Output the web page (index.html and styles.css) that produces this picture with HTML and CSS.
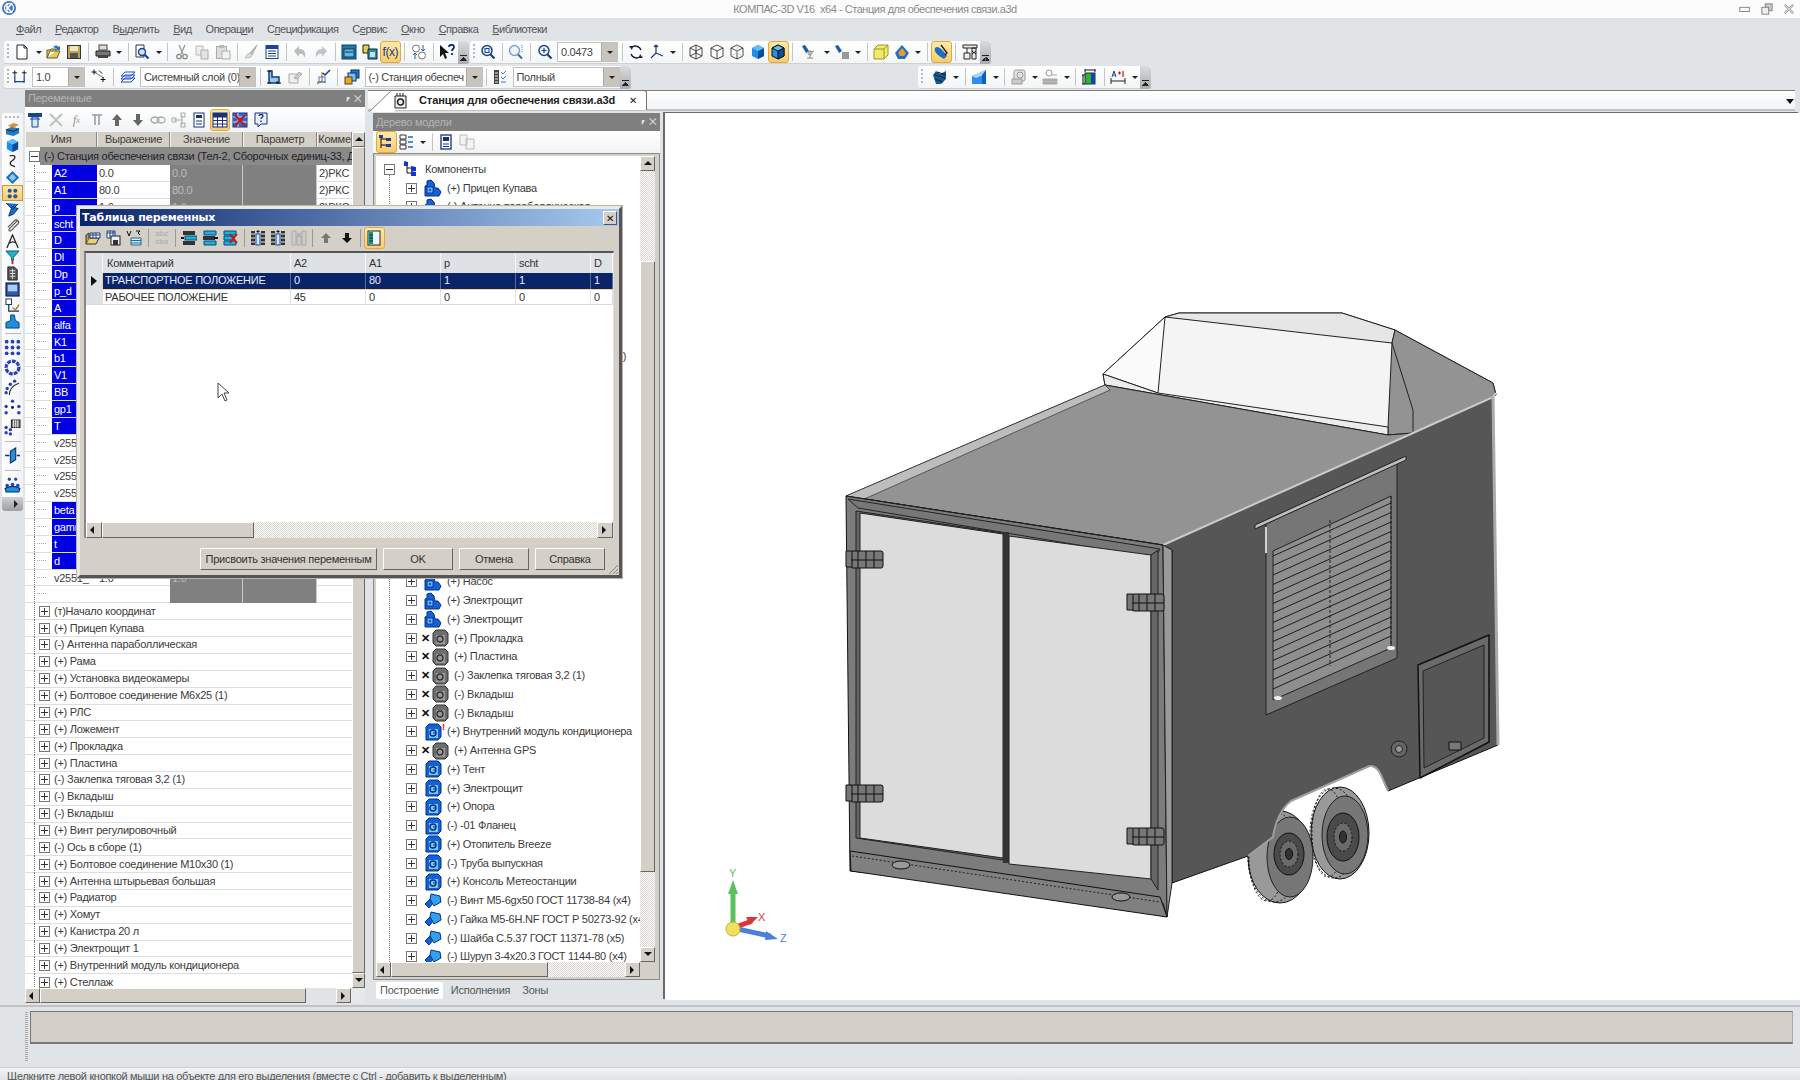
FILE: index.html
```html
<!DOCTYPE html>
<html lang="ru">
<head>
    <meta charset="UTF-8">
    <title>КОМПАС-3D V16 x64 - Станция для обеспечения связи.a3d</title>
    <link rel="stylesheet" href="styles.css">
</head>
<body>
<!-- icon sprite -->
<svg class="sprite" xmlns="http://www.w3.org/2000/svg">
    <symbol id="new" viewBox="0 0 16 16"><path d="M3 1h7l3 3v11H3z" fill="#fff" stroke="#222"/><path d="M10 1v3h3" fill="none" stroke="#222"/></symbol>
    <symbol id="open" viewBox="0 0 16 16"><path d="M1 14V6h3l1-1h5v2H4l-3 7h10l3-7H10" fill="#e8c860" stroke="#6b5a1c"/><path d="M7 3c2-2 4-2 6 0l1-1v4h-4l1-1c-1-1-2-1-4-2z" fill="#1e6fd0"/></symbol>
    <symbol id="save" viewBox="0 0 16 16"><rect x="1.5" y="1.5" width="13" height="13" fill="#b9a45a" stroke="#333"/><rect x="4" y="2" width="8" height="5" fill="#efe6b8"/><rect x="4" y="9" width="8" height="5" fill="#555"/></symbol>
    <symbol id="print" viewBox="0 0 16 16"><rect x="4" y="1" width="8" height="5" fill="#ddd" stroke="#444"/><path d="M1 7h14v5H1z" fill="#777" stroke="#222"/><rect x="3" y="11" width="10" height="3" fill="#444"/></symbol>
    <symbol id="prev" viewBox="0 0 16 16"><path d="M2 1h8v12H2z" fill="#fff" stroke="#334"/><circle cx="8" cy="8" r="3.5" fill="#cfe4f6" stroke="#1b3f8f" stroke-width="1.4"/><path d="M10.500 10.500l4 4" stroke="#1b3f8f" stroke-width="2"/></symbol>
    <symbol id="cut" viewBox="0 0 16 16"><path d="M5 1l4 9M11 1l-4 9" stroke="#999" stroke-width="1.300" fill="none"/><circle cx="5" cy="12.500" r="2.200" fill="none" stroke="#888" stroke-width="1.300"/><circle cx="11" cy="12.500" r="2.200" fill="none" stroke="#888" stroke-width="1.300"/></symbol>
    <symbol id="copy" viewBox="0 0 16 16"><path d="M2 2h7v9H2z" fill="#eee" stroke="#bbb"/><path d="M7 6h7v9H7z" fill="#e4e4e4" stroke="#aaa"/></symbol>
    <symbol id="paste" viewBox="0 0 16 16"><rect x="1.500" y="2.500" width="10" height="12" fill="#ddd" stroke="#aaa"/><rect x="4" y="1" width="5" height="3" fill="#bbb"/><path d="M7 7h8v8H7z" fill="#f2f2f2" stroke="#aaa"/></symbol>
    <symbol id="brush" viewBox="0 0 16 16"><path d="M14 1L7 9l2 2z" fill="#bbb" stroke="#aaa"/><path d="M7 9c-3 0-3 3-5 5 4 0 7-1 7-3z" fill="#ddd" stroke="#bbb"/></symbol>
    <symbol id="props" viewBox="0 0 16 16"><rect x="2" y="1.500" width="12" height="13" fill="#fff" stroke="#17458f"/><path d="M2 2h12v3H2z" fill="#17458f"/><path d="M4 7h8M4 9.500h8M4 12h8" stroke="#17458f"/></symbol>
    <symbol id="undo" viewBox="0 0 16 16"><path d="M2 7l5-5v3c5 0 7 3 6 9-1-3-3-5-6-4v3z" fill="#bbb"/></symbol>
    <symbol id="redo" viewBox="0 0 16 16"><path d="M14 7L9 2v3C4 5 2 8 3 14c1-3 3-5 6-4v3z" fill="#c4c4c4"/></symbol>
    <symbol id="win" viewBox="0 0 16 16"><rect x="1" y="1" width="14" height="14" fill="#1a7ea8" stroke="#0b3a6c"/><rect x="3" y="5" width="10" height="8" fill="#6bb7d8" stroke="#0b3a6c"/><path d="M4 8h8" stroke="#0b3a6c"/></symbol>
    <symbol id="tips" viewBox="0 0 16 16"><path d="M1 1h6v8H1z" fill="#e3d24a" stroke="#222"/><path d="M6 5h9v10H6z" fill="#3b8a9e" stroke="#123"/><path d="M8 8h5v5H8z" fill="#bfe3ee"/></symbol>
    <symbol id="swap" viewBox="0 0 16 16"><circle cx="5" cy="4.500" r="3.500" fill="#fff" stroke="#777"/><circle cx="11" cy="11.500" r="3.500" fill="#fff" stroke="#777"/><path d="M12 1v6M10 5l2 2 2-2M4 9v6M2 11l2-2 2 2" stroke="#1e5fb0" fill="none"/></symbol>
    <symbol id="help" viewBox="0 0 16 16"><path d="M1 1v12l3-3 2 5 2-1-2-5h4z" fill="#111"/><path d="M10 3c0-3 5-3 5 0 0 2-2 2-2 4M13 9v2" stroke="#0a2a6a" stroke-width="1.800" fill="none"/></symbol>
    <symbol id="zwin" viewBox="0 0 16 16"><circle cx="7" cy="6.500" r="5" fill="#e8f1f8" stroke="#17458f" stroke-width="1.500"/><rect x="5" y="4.500" width="4" height="4" fill="none" stroke="#17458f"/><path d="M10.500 10.500l4 4" stroke="#1b3f6f" stroke-width="2.200"/></symbol>
    <symbol id="zall" viewBox="0 0 16 16"><circle cx="6.500" cy="6.500" r="5" fill="#eef4fa" stroke="#7ba0c8" stroke-width="1.400"/><path d="M14 1v8" stroke="#4a7fb8" stroke-dasharray="1 1"/><path d="M10 10.500l4 4" stroke="#3a6a9a" stroke-width="2"/></symbol>
    <symbol id="zplus" viewBox="0 0 16 16"><circle cx="7" cy="6.500" r="5" fill="#eef4fa" stroke="#17458f" stroke-width="1.400"/><path d="M4.500 6.500h5M7 4v5" stroke="#17458f" stroke-width="1.200"/><path d="M10.500 10.500l4 4" stroke="#1b3f6f" stroke-width="2.200"/></symbol>
    <symbol id="rot" viewBox="0 0 16 16"><path d="M13 6A6 6 0 0 0 3 4M3 10a6 6 0 0 0 10 2" fill="none" stroke="#223" stroke-width="1.500"/><path d="M1 2l4 0-1 4zM15 14l-4 0 1-4z" fill="#223"/></symbol>
    <symbol id="axes" viewBox="0 0 16 16"><path d="M7 9V1M5 3l2-2 2 2M7 9l7 3M7 9l-5 5" stroke="#123c80" stroke-width="1.200" fill="none"/></symbol>
    <symbol id="cwire" viewBox="0 0 16 16"><path d="M8 1l6 3v8l-6 3-6-3V4zM2 4l6 3 6-3M8 7v8M8 1v8M2 12l6-3 6 3" fill="#fff" stroke="#333" stroke-width=".9"/></symbol>
    <symbol id="chid" viewBox="0 0 16 16"><path d="M8 1l6 3v8l-6 3-6-3V4zM2 4l6 3 6-3M8 7v8" fill="#fff" stroke="#333" stroke-width=".9"/></symbol>
    <symbol id="cgrey" viewBox="0 0 16 16"><path d="M8 1l6 3v8l-6 3-6-3V4zM2 4l6 3 6-3M8 7v8" fill="#fff" stroke="#333" stroke-width=".9"/><path d="M8 9l-6 3M8 9l6 3M8 1v8" stroke="#bbb" stroke-width=".8"/></symbol>
    <symbol id="cblue" viewBox="0 0 16 16"><path d="M8 1l6 3v8l-6 3-6-3V4z" fill="#1f8fe8"/><path d="M8 7l6-3v8l-6 3z" fill="#0b4f9a"/><path d="M2 4l6-3 6 3-6 3z" fill="#63bdf5"/></symbol>
    <symbol id="cedge" viewBox="0 0 16 16"><path d="M8 1l6 3v8l-6 3-6-3V4z" fill="#1f8fe8" stroke="#111"/><path d="M8 7l6-3v8l-6 3z" fill="#0b4f9a" stroke="#111"/><path d="M2 4l6-3 6 3-6 3z" fill="#63bdf5" stroke="#111"/></symbol>
    <symbol id="lamp" viewBox="0 0 16 16"><path d="M1 2l3-1 4 6-3 2z" fill="#1a5ca8"/><path d="M9 7v7M6 14h6M9 8l4-1" stroke="#888" fill="none"/><circle cx="9" cy="9" r="2" fill="none" stroke="#888"/></symbol>
    <symbol id="lamp2" viewBox="0 0 16 16"><path d="M1 2l3-1 4 6-3 2z" fill="#1a5ca8"/><rect x="8" y="8" width="7" height="7" fill="#999"/></symbol>
    <symbol id="cyel" viewBox="0 0 16 16"><path d="M1 5l4-4h10v10l-4 4H1z" fill="#f2ea70" stroke="#9a9a20"/><path d="M1 5h10v10M11 5l4-4" fill="none" stroke="#9a9a20"/></symbol>
    <symbol id="shade" viewBox="0 0 16 16"><path d="M8 1l7 8-4 6H4L1 9z" fill="#1f6fc8"/><path d="M8 4l4 5-2 3H6L4 9z" fill="#e99a2a"/></symbol>
    <symbol id="tang" viewBox="0 0 16 16"><path d="M2 4c3-3 7 1 12 8l-3 3C7 13 0 8 2 4z" fill="#1d6fc4"/><path d="M8 1l6 8-2 2" fill="none" stroke="#223" stroke-width="1.400"/></symbol>
    <symbol id="crane" viewBox="0 0 16 16"><path d="M1 1h14v3H1zM10 4h4v11h-4zM2 9h6v6H2z" fill="#eee" stroke="#222"/><path d="M5 4v5M10 7l4 3M14 7l-4 3" stroke="#222"/></symbol>
    <symbol id="tpts" viewBox="0 0 16 16"><path d="M3 6v8M13 6v8M3 13h10" stroke="#17458f" stroke-width="1.300"/><path d="M3 1v5M0.500 3.500h5M13 1v5M10.500 3.500h5" stroke="#111"/><path d="M5 13h-2M13 13h-2" stroke="#17458f"/></symbol>
    <symbol id="pts" viewBox="0 0 16 16"><path d="M3 3l10 6" stroke="#777"/><path d="M3 0.500v5M0.500 3h5M12 8v5M9.500 10.500h5M8 1.500l3 3" stroke="#111"/></symbol>
    <symbol id="layers" viewBox="0 0 16 16"><path d="M1 7l4-4h10l-4 4zM1 10l4-4h10l-4 4zM1 13l4-4h10l-4 4z" fill="#fff" stroke="#1b4fc0"/></symbol>
    <symbol id="frame" viewBox="0 0 16 16"><path d="M3 2h3v6h7v6H3z" fill="#9cc3e8" stroke="#0c3e7a" stroke-width="1.500"/><path d="M1 2h4M1 14h4M11 12v3M15 14h-4" stroke="#111"/></symbol>
    <symbol id="frame2" viewBox="0 0 16 16"><path d="M2 5h9v9H2z" fill="#eee" stroke="#aaa"/><path d="M7 9l5-6 3 2-5 5z" fill="#ccc" stroke="#aaa"/></symbol>
    <symbol id="chk" viewBox="0 0 16 16"><path d="M7 3v9M2 13h9M7 12l-5 3" stroke="#8a6a20" fill="none"/><rect x="4" y="8" width="6" height="5" fill="none" stroke="#4a78c0"/><path d="M8 4l2 2 5-5" fill="none" stroke="#123c90" stroke-width="1.500"/></symbol>
    <symbol id="asm" viewBox="0 0 16 16"><rect x="7" y="1" width="8" height="8" fill="#1f7ac8" stroke="#0b2f70"/><rect x="4" y="4" width="8" height="8" fill="#7ac0e8" stroke="#0b2f70"/><rect x="1" y="8" width="7" height="7" fill="#e8a830" stroke="#5a4010"/></symbol>
    <symbol id="list" viewBox="0 0 16 16"><path d="M1 1h5v14H1z" fill="#444"/><path d="M2 4h3M2 7h3M2 10h3M2 13h3" stroke="#eee"/><path d="M8 3l2 2 3-3M8 8l2 2 3-3M8 13h5" stroke="#3a7ac8" fill="none"/></symbol>
    <symbol id="rblk" viewBox="0 0 16 16"><path d="M4 15L1 6l3-4 4 3 6-3v8l-5 5z" fill="#0f5a9a"/><path d="M3 6l10 3M3 10l8 3M5 3l9 3" stroke="#222" stroke-width="1.300"/></symbol>
    <symbol id="wedge" viewBox="0 0 16 16"><path d="M1 7L15 1v14H1z" fill="#2e8ef0"/><path d="M1 7L15 1v4L5 9z" fill="#a6d8fb"/><path d="M11 6l4-5v14h-4z" fill="#0f5fc0"/></symbol>
    <symbol id="gcyl" viewBox="0 0 16 16"><rect x="3" y="1" width="11" height="11" rx="2" fill="#e4e4e4" stroke="#999"/><circle cx="9" cy="6" r="3" fill="none" stroke="#999"/><path d="M1 10h10v5H1z" fill="#ccc" stroke="#999"/></symbol>
    <symbol id="gpts" viewBox="0 0 16 16"><circle cx="7" cy="4" r="3" fill="#fff" stroke="#999"/><path d="M10 6h5M1 10h14v2H1zM1 13h14v2H1z" fill="#aaa" stroke="#aaa"/></symbol>
    <symbol id="meas" viewBox="0 0 16 16"><rect x="3" y="4" width="10" height="11" fill="#2cb52c" stroke="#134"/><path d="M9 4h4v11H9z" fill="#1d3fb0"/><path d="M3 1h10M3 0v3M13 0v3" stroke="#111"/><path d="M1 6v9M0 6h3M0 15h3" stroke="#111"/></symbol>
    <symbol id="dim" viewBox="0 0 16 16"><path d="M1 9v6M15 9v6M1 12h14" stroke="#222"/><path d="M2 8l2-6 2 6M3 6h2" fill="none" stroke="#1a3f9a"/><path d="M8 4h3M9.500 2.500v3M13 2v6" stroke="#d01010" stroke-width="1.200"/></symbol>
    <!-- dialog toolbar -->
    <symbol id="dopen" viewBox="0 0 16 16"><path d="M1 14l3-6h10l-3 6z" fill="#e8d078" stroke="#333"/><path d="M1 14V5l3-2v5" fill="#b8a040" stroke="#333"/><path d="M5 3h10v5H5z" fill="#fff" stroke="#14408a"/><path d="M5 5h10M8 3v5M11 3v5" stroke="#14408a"/></symbol>
    <symbol id="dsave" viewBox="0 0 16 16"><path d="M1 1h8v7H1z" fill="#fff" stroke="#14408a"/><path d="M1 3h8M4 1v7M7 1v7" stroke="#14408a"/><rect x="5" y="6" width="9" height="9" fill="#eee" stroke="#222"/><rect x="7" y="10" width="5" height="5" fill="#333"/></symbol>
    <symbol id="dv" viewBox="0 0 16 16"><path d="M1 1l2 5 2-5M10 1h4l-2 2 2 2" fill="none" stroke="#111"/><path d="M5 8h10v7H5z" fill="#d8eef8" stroke="#1a6a98"/><path d="M5 10.500h10M5 13h10" stroke="#1a6a98"/></symbol>
    <symbol id="rw1" viewBox="0 0 16 16"><path d="M2 1h12v4H2zM2 11h12v4H2z" fill="#333"/><rect x="4" y="6" width="12" height="4" fill="#20b0d8" stroke="#0a4a80"/><path d="M0 8h3" stroke="#111" stroke-width="2"/></symbol>
    <symbol id="rw2" viewBox="0 0 16 16"><path d="M2 1h12v4H2zM2 11h12v4H2z" fill="#20b0d8" stroke="#0a4a80"/><rect x="1" y="6" width="12" height="4" fill="#333"/><path d="M12 8h4" stroke="#111" stroke-width="2"/></symbol>
    <symbol id="rw3" viewBox="0 0 16 16"><path d="M2 1h12v4H2zM2 6h10v4H2zM2 11h12v4H2z" fill="#20b0d8" stroke="#0a4a80"/><path d="M8 4l7 9M15 4l-7 9" stroke="#d01010" stroke-width="1.800"/></symbol>
    <symbol id="cl1" viewBox="0 0 16 16"><path d="M1 1h4v14H1zM11 1h4v14h-4z" fill="#333"/><path d="M1 4h4M1 8h4M1 12h4M11 4h4M11 8h4M11 12h4" stroke="#eee"/><rect x="6" y="4" width="4" height="11" fill="#cfe8fa" stroke="#1446a0"/><path d="M8 0v3M6.500 1.500h3" stroke="#111"/></symbol>
    <symbol id="cl3" viewBox="0 0 16 16"><path d="M1 1h4v14H1zM11 1h4v14h-4zM6 6h4v9H6z" fill="#ccc" stroke="#aaa"/><path d="M6 3l4 4M10 3L6 7" stroke="#aaa" stroke-width="1.500"/></symbol>
    <symbol id="upg" viewBox="0 0 16 16"><path d="M8 3l5 5h-3v5H6V8H3z" fill="#777"/></symbol>
    <symbol id="dnb" viewBox="0 0 16 16"><path d="M8 13L3 8h3V3h4v5h3z" fill="#111"/></symbol>
    <symbol id="pane" viewBox="0 0 16 16"><rect x="2" y="1" width="12" height="14" fill="#eef6fa" stroke="#223"/><rect x="3" y="2" width="4" height="12" fill="#109a8a"/><path d="M3 5h4M3 8h4M3 11h4" stroke="#042"/></symbol>
    <!-- left strip -->
    <symbol id="s1" viewBox="0 0 16 16"><path d="M1 8l6-3 8 2v5l-6 3-8-2z" fill="#1f7ac8"/><path d="M3 4l6-3 6 2-6 3z" fill="#e88a20"/><path d="M1 8l8 2 6-3" stroke="#222" fill="none"/></symbol>
    <symbol id="s3" viewBox="0 0 16 16"><path d="M5 2c4-1 7 0 5 3s-6 3-4 6 5 1 4 3" fill="none" stroke="#222" stroke-width="1.300"/></symbol>
    <symbol id="s4" viewBox="0 0 16 16"><path d="M1 8l7-7 7 7-7 7z" fill="#1b6fc0"/><path d="M4 8l4-4 4 4-4 4z" fill="#8cc6ee"/></symbol>
    <symbol id="s5" viewBox="0 0 16 16"><circle cx="5" cy="5" r="2.200" fill="#1a5ca8"/><circle cx="11" cy="5" r="2.200" fill="#1a5ca8"/><circle cx="5" cy="11" r="2.200" fill="#1a5ca8"/><circle cx="11" cy="11" r="2.200" fill="#1a5ca8"/></symbol>
    <symbol id="s6" viewBox="0 0 16 16"><path d="M1 1l7 7 6-6M6 9l-2 6 5-2 5-6-6-2z" fill="#1b6fc0" stroke="#0b2f70"/></symbol>
    <symbol id="s7" viewBox="0 0 16 16"><path d="M13 3L5 11c-2 2 0 4 2 2l7-7c2-3-2-5-4-3L3 10" fill="none" stroke="#555" stroke-width="1.300"/></symbol>
    <symbol id="s8" viewBox="0 0 16 16"><path d="M2 15L8 1l6 14M4 10c3-2 6-2 8 0" fill="none" stroke="#222" stroke-width="1.300"/></symbol>
    <symbol id="s9" viewBox="0 0 16 16"><path d="M1 1h14L9 8v3H7V8z" fill="#22b0c8" stroke="#0a5a80"/><path d="M8 11v4" stroke="#d02020" stroke-width="2"/></symbol>
    <symbol id="s10" viewBox="0 0 16 16"><path d="M3 1h7l3 3v11H3z" fill="#555" stroke="#222"/><path d="M5 5h6M5 8h6M5 11h6M8 3v11" stroke="#ddd"/></symbol>
    <symbol id="s11" viewBox="0 0 16 16"><rect x="1" y="1" width="14" height="14" fill="#2a5ca8" stroke="#103"/><rect x="3" y="3" width="10" height="7" fill="#a8cdf0"/></symbol>
    <symbol id="s12" viewBox="0 0 16 16"><rect x="1" y="1" width="6" height="6" fill="#fff" stroke="#134"/><path d="M4 7v7h11" fill="none" stroke="#134" stroke-width="1.300"/><path d="M8 10l3 3 4-6" fill="none" stroke="#a08020" stroke-width="1.500"/></symbol>
    <symbol id="s13" viewBox="0 0 16 16"><path d="M1 15V9l5-2V1h4l1 6 4 2v6z" fill="#1f8fd8" stroke="#0b3f80"/></symbol>
    <symbol id="s14" viewBox="0 0 16 16"><g fill="#2a3fb8"><circle cx="2.500" cy="2.500" r="1.800"/><circle cx="8" cy="2.500" r="1.800"/><circle cx="13.500" cy="2.500" r="1.800"/><circle cx="2.500" cy="8" r="1.800"/><circle cx="8" cy="8" r="1.800"/><circle cx="13.500" cy="8" r="1.800"/><circle cx="2.500" cy="13.500" r="1.800"/><circle cx="8" cy="13.500" r="1.800"/><circle cx="13.500" cy="13.500" r="1.800"/></g></symbol>
    <symbol id="s15" viewBox="0 0 16 16"><circle cx="8" cy="8" r="6" fill="none" stroke="#2a3fb8" stroke-width="3" stroke-dasharray="3.500 1"/></symbol>
    <symbol id="s16" viewBox="0 0 16 16"><path d="M5 15c0-5 3-9 9-11" fill="none" stroke="#222"/><g fill="#2a3fb8"><circle cx="2" cy="13" r="1.600"/><circle cx="3" cy="9" r="1.600"/><circle cx="6" cy="5" r="1.600"/><circle cx="10" cy="2" r="1.600"/></g></symbol>
    <symbol id="s17" viewBox="0 0 16 16"><g fill="#2a3fb8"><circle cx="2" cy="7" r="1.600"/><circle cx="2" cy="13" r="1.600"/><circle cx="8" cy="2" r="1.600"/><circle cx="14" cy="7" r="1.600"/><circle cx="14" cy="13" r="1.600"/></g><circle cx="8" cy="8" r="1.300" fill="#111"/></symbol>
    <symbol id="s18" viewBox="0 0 16 16"><rect x="7" y="1" width="8" height="7" fill="#777" stroke="#222"/><path d="M9 1v7M11 1v7M13 1v7" stroke="#ddd"/><g fill="#2a3fb8"><circle cx="2" cy="8" r="1.600"/><circle cx="6" cy="10" r="1.600"/><circle cx="2" cy="13" r="1.600"/><circle cx="6" cy="14" r="1.600"/></g></symbol>
    <symbol id="s19" viewBox="0 0 16 16"><path d="M6 4l5-3v11l-5 3z" fill="#2a8fd8" stroke="#0b2f70"/><path d="M1 8h4M12 8h3" stroke="#0b2f70" stroke-width="1.300"/></symbol>
    <symbol id="s20" viewBox="0 0 16 16"><path d="M1 12c3-3 11-3 14 0l-1 3H2z" fill="#1f8fd8" stroke="#0b2f70"/><g fill="#2a3fb8"><circle cx="3" cy="9" r="1.700"/><circle cx="8" cy="8" r="1.700"/><circle cx="13" cy="9" r="1.700"/><circle cx="5" cy="3" r="1.500"/><circle cx="11" cy="3" r="1.500"/></g></symbol>
    <!-- variables toolbar -->
    <symbol id="v1" viewBox="0 0 16 16"><path d="M1 1h14v4H1z" fill="#17458f"/><path d="M5 5h6v10H5z" fill="#d8e8f8" stroke="#17458f"/><path d="M3 7h10" stroke="#17458f"/></symbol>
    <symbol id="vx" viewBox="0 0 16 16"><path d="M2 2l12 12M14 2L2 14" stroke="#c0c0c0" stroke-width="2"/></symbol>
    <symbol id="vpi" viewBox="0 0 16 16"><path d="M3 3h10M6 3v10M10 3v10" stroke="#999" stroke-width="1.500"/></symbol>
    <symbol id="vup" viewBox="0 0 16 16"><path d="M8 2l5 6h-3v6H6V8H3z" fill="#666"/></symbol>
    <symbol id="vdn" viewBox="0 0 16 16"><path d="M8 14l5-6h-3V2H6v6H3z" fill="#666"/></symbol>
    <symbol id="vlink" viewBox="0 0 16 16"><ellipse cx="5" cy="8" rx="4" ry="3" fill="none" stroke="#aaa" stroke-width="1.300"/><ellipse cx="11" cy="8" rx="4" ry="3" fill="none" stroke="#aaa" stroke-width="1.300"/></symbol>
    <symbol id="vtree" viewBox="0 0 16 16"><path d="M3 8h8M11 3v10" stroke="#aaa"/><rect x="1" y="6" width="4" height="4" fill="none" stroke="#aaa"/><rect x="10" y="1" width="4" height="4" fill="none" stroke="#aaa"/><rect x="10" y="11" width="4" height="4" fill="none" stroke="#aaa"/></symbol>
    <symbol id="vdoc" viewBox="0 0 16 16"><rect x="3" y="1" width="10" height="14" fill="#fff" stroke="#17307f"/><rect x="5" y="3" width="6" height="3" fill="#17307f"/><path d="M5 9h6M5 12h6" stroke="#17307f"/></symbol>
    <symbol id="vtab" viewBox="0 0 16 16"><rect x="1" y="1" width="14" height="14" fill="#fff" stroke="#17307f"/><path d="M1 5h14M1 8.500h14M1 12h14M5.500 1v14M10.500 1v14" stroke="#17307f"/><rect x="1" y="1" width="14" height="4" fill="#17307f"/></symbol>
    <symbol id="vtabx" viewBox="0 0 16 16"><rect x="1" y="1" width="14" height="14" fill="#3a6ad0" stroke="#17307f"/><path d="M1 5h14M1 10h14M6 1v14" stroke="#cde"/><path d="M3 3l10 11M13 3L3 14" stroke="#c01818" stroke-width="2"/></symbol>
    <symbol id="vq" viewBox="0 0 16 16"><path d="M2 1h12v11H8l-3 3v-3H2z" fill="#e8f0fa" stroke="#17307f"/><path d="M6 4c0-2 4-2 4 0 0 1.500-2 1.500-2 3M8 8.500v1.500" fill="none" stroke="#17307f" stroke-width="1.300"/></symbol>
    <!-- tree -->
    <symbol id="troot" viewBox="0 0 16 16"><path d="M5 3v9h4M5 7h4" fill="none" stroke="#111"/><path d="M2 0l4 1v4H2zM9 5l5 1v4H9zM9 10l5 1v4H9z" fill="#1436c8"/></symbol>
    <symbol id="tasm" viewBox="0 0 18 18"><path d="M1 17V7l2-1V2l4-1 3 3 1 5h3l3 4-2 4z" fill="#0f62d8" stroke="#08308a"/><rect x="3" y="8" width="6" height="6" fill="#7fc4f2" stroke="#08308a"/><circle cx="6" cy="11" r="1.500" fill="#0f62d8"/></symbol>
    <symbol id="tpart" viewBox="0 0 18 18"><path d="M2 4l3-3h9l3 3v10l-3 3H2z" fill="#0f62d8" stroke="#08308a"/><path d="M5 6h9v9H5z" fill="#7fc4f2"/><circle cx="9" cy="10" r="3" fill="none" stroke="#08308a" stroke-width="1.400"/><path d="M9 10h3" stroke="#08308a"/></symbol>
    <symbol id="tgrey" viewBox="0 0 18 18"><path d="M2 4l3-3h9l3 3v10l-3 3H5l-3-3z" fill="#6e6e6e" stroke="#333"/><path d="M5 6h9v9H5z" fill="#9a9a9a"/><circle cx="9" cy="10" r="3" fill="none" stroke="#333" stroke-width="1.400"/></symbol>
    <symbol id="tstd" viewBox="0 0 18 18"><path d="M1 12l6-6 3 4-5 6z" fill="#0f62d8" stroke="#08308a"/><path d="M7 2l9 2 1 6-7 4-4-7z" fill="#35a0ee" stroke="#08308a"/></symbol>
    <symbol id="ta3d" viewBox="0 0 16 16"><path d="M1 3h11v12H1z" fill="#eee" stroke="#222"/><path d="M3 0v3M6 0v3M9 0v3" stroke="#222"/><circle cx="6.500" cy="9" r="3" fill="none" stroke="#222" stroke-width="1.500"/></symbol>
    <symbol id="tb1" viewBox="0 0 16 16"><path d="M3 1v13M3 5h5M3 11h5" stroke="#111" fill="none"/><path d="M1 1h4v3H1zM8 4h5v3H8zM8 10h5v3H8z" fill="#1d3f9a"/></symbol>
    <symbol id="tb2" viewBox="0 0 16 16"><path d="M1 1h6v4H1zM1 6h6v4H1zM1 11h6v4H1z" fill="#fff" stroke="#333"/><path d="M9 3h5M9 8h5M9 13h5" stroke="#1d6fb0" stroke-width="1.500"/></symbol>
    <symbol id="tb3" viewBox="0 0 16 16"><rect x="3" y="1" width="10" height="14" fill="#fff" stroke="#17307f" stroke-width="1.300"/><rect x="5" y="3" width="6" height="4" fill="#17307f"/><path d="M5 10h6M5 12.500h6" stroke="#17307f"/></symbol>
    <symbol id="tb4" viewBox="0 0 16 16"><path d="M1 1h7v10H1zM7 5h8v10H7z" fill="#f4f4f4" stroke="#bbb"/></symbol>
</svg>

<div class="titlebar">
    <svg class="logo" viewBox="0 0 16 16"><circle cx="8" cy="8" r="7" fill="#3d78c4"/><circle cx="8" cy="8" r="4.500" fill="none" stroke="#e8f0fa" stroke-width="1.500"/><path d="M6 3v10M7 8l4-5M7 8l4 5" stroke="#fff" stroke-width="1.500"/></svg>
    <span class="title-text">КОМПАС-3D V16&nbsp; x64 - Станция для обеспечения связи.a3d</span>
    <div class="win-buttons">
        <svg viewBox="0 0 14 10"><rect x="1" y="3" width="11" height="5" fill="none" stroke="#777"/></svg>
        <svg viewBox="0 0 14 14"><rect x="5" y="1" width="8" height="8" fill="#ccc" stroke="#777"/><rect x="1" y="5" width="8" height="8" fill="#eee" stroke="#777"/></svg>
        <svg viewBox="0 0 14 14"><path d="M2 2l10 10M12 2L2 12" stroke="#999" stroke-width="2.500"/><path d="M2 2l10 10M12 2L2 12" stroke="#fff" stroke-width=".8"/></svg>
    </div>
</div>

<div class="menubar">
    <span><u>Ф</u>айл</span><span><u>Р</u>едактор</span><span>В<u>ы</u>делить</span><span><u>В</u>ид</span><span>Операц<u>и</u>и</span><span>С<u>п</u>ецификация</span><span>С<u>е</u>рвис</span><span><u>О</u>кно</span><span><u>С</u>правка</span><span><u>Б</u>иблиотеки</span>
</div>

<div class="toolrow">
    <div class="toolbar">
        <i class="grip"></i>
        <b class="t"><svg><use href="#new"/></svg></b><b class="dd"></b>
        <b class="t"><svg><use href="#open"/></svg></b>
        <b class="t"><svg><use href="#save"/></svg></b><i class="sp"></i>
        <b class="t"><svg><use href="#print"/></svg></b><b class="dd"></b><i class="sp"></i>
        <b class="t"><svg><use href="#prev"/></svg></b><b class="dd"></b><i class="sp"></i>
        <b class="t"><svg><use href="#cut"/></svg></b>
        <b class="t"><svg><use href="#copy"/></svg></b>
        <b class="t"><svg><use href="#paste"/></svg></b><i class="sp"></i>
        <b class="t"><svg><use href="#brush"/></svg></b>
        <b class="t"><svg><use href="#props"/></svg></b><i class="sp"></i>
        <b class="t"><svg><use href="#undo"/></svg></b>
        <b class="t"><svg><use href="#redo"/></svg></b><i class="sp"></i>
        <b class="t"><svg><use href="#win"/></svg></b>
        <b class="t"><svg><use href="#tips"/></svg></b>
        <b class="t on fx">f(x)</b><i class="sp"></i>
        <b class="t"><svg><use href="#swap"/></svg></b><i class="sp"></i>
        <b class="t"><svg><use href="#help"/></svg></b>
        <i class="cap"></i>
    </div>
    <div class="toolbar">
        <i class="grip"></i>
        <b class="t"><svg><use href="#zwin"/></svg></b><i class="sp"></i>
        <b class="t"><svg><use href="#zall"/></svg></b><i class="sp"></i>
        <b class="t"><svg><use href="#zplus"/></svg></b>
        <span class="combo combo-scale">0.0473</span><i class="sp"></i>
        <b class="t"><svg><use href="#rot"/></svg></b>
        <b class="t"><svg><use href="#axes"/></svg></b><b class="dd"></b><i class="sp"></i>
        <b class="t"><svg><use href="#cwire"/></svg></b>
        <b class="t"><svg><use href="#chid"/></svg></b>
        <b class="t"><svg><use href="#cgrey"/></svg></b>
        <b class="t"><svg><use href="#cblue"/></svg></b>
        <b class="t on"><svg><use href="#cedge"/></svg></b><i class="sp"></i>
        <b class="t wide"><svg><use href="#lamp"/></svg></b><b class="dd"></b>
        <b class="t"><svg><use href="#lamp2"/></svg></b><b class="dd"></b><i class="sp"></i>
        <b class="t"><svg><use href="#cyel"/></svg></b>
        <b class="t"><svg><use href="#shade"/></svg></b><b class="dd"></b><i class="sp"></i>
        <b class="t on"><svg><use href="#tang"/></svg></b><i class="sp"></i>
        <b class="t"><svg><use href="#crane"/></svg></b>
        <i class="cap"></i>
    </div>
</div>

<div class="toolrow toolrow-second">
    <div class="toolbar">
        <i class="grip"></i>
        <b class="t narrow"><svg><use href="#tpts"/></svg></b>
        <span class="combo combo-step">1.0</span>
        <b class="t"><svg><use href="#pts"/></svg></b><i class="sp"></i>
        <b class="t"><svg><use href="#layers"/></svg></b>
        <span class="combo combo-layer">Системный слой (0)</span><i class="sp"></i>
        <b class="t"><svg><use href="#frame"/></svg></b>
        <b class="t"><svg><use href="#frame2"/></svg></b><i class="sp"></i>
        <b class="t"><svg><use href="#chk"/></svg></b><i class="sp"></i>
        <b class="t"><svg><use href="#asm"/></svg></b>
        <span class="combo combo-part">(-) Станция обеспеч</span><i class="sp"></i>
        <b class="t"><svg><use href="#list"/></svg></b>
        <span class="combo combo-mode">Полный</span>
        <i class="cap"></i>
    </div>
    <div class="toolbar toolbar-right">
        <i class="grip grip-wide"></i>
        <b class="t"><svg><use href="#rblk"/></svg></b><b class="dd"></b><i class="sp"></i>
        <b class="t"><svg><use href="#wedge"/></svg></b><b class="dd"></b><i class="sp"></i>
        <b class="t"><svg><use href="#gcyl"/></svg></b><b class="dd"></b>
        <b class="t"><svg><use href="#gpts"/></svg></b><b class="dd"></b><i class="sp"></i>
        <b class="t"><svg><use href="#meas"/></svg></b><i class="sp"></i>
        <b class="t"><svg><use href="#dim"/></svg></b><b class="dd"></b>
        <i class="cap"></i>
    </div>
</div>

<div class="work">
    <div class="strip">
        <i class="strip-grip"></i>
        <b class="st"><svg><use href="#s1"/></svg></b>
        <b class="st"><svg><use href="#cblue"/></svg></b>
        <b class="st"><svg><use href="#s3"/></svg></b>
        <b class="st"><svg><use href="#s4"/></svg></b>
        <b class="st on"><svg><use href="#s5"/></svg></b>
        <b class="st"><svg><use href="#s6"/></svg></b>
        <b class="st"><svg><use href="#s7"/></svg></b>
        <b class="st"><svg><use href="#s8"/></svg></b>
        <b class="st"><svg><use href="#s9"/></svg></b>
        <b class="st"><svg><use href="#s10"/></svg></b>
        <b class="st"><svg><use href="#s11"/></svg></b>
        <b class="st"><svg><use href="#s12"/></svg></b>
        <b class="st"><svg><use href="#s13"/></svg></b>
        <i class="strip-sep"></i>
        <b class="st big"><svg><use href="#s14"/></svg></b>
        <b class="st big"><svg><use href="#s15"/></svg></b>
        <b class="st big"><svg><use href="#s16"/></svg></b>
        <b class="st big"><svg><use href="#s17"/></svg></b>
        <b class="st big"><svg><use href="#s18"/></svg></b>
        <i class="strip-sep"></i>
        <b class="st big2"><svg><use href="#s19"/></svg></b>
        <i class="strip-sep"></i>
        <b class="st big2"><svg><use href="#s20"/></svg></b>
        <div class="strip-end"><em></em></div>
    </div>

    <!-- variables panel -->
    <section class="vars">
        <div class="caption"><span>Переменные</span><span class="cap-btns">&#9110;&nbsp;&#10005;</span></div>
        <div class="vars-tools">
            <b class="t"><svg><use href="#v1"/></svg></b>
            <b class="t"><svg><use href="#vx"/></svg></b>
            <b class="t fxg">f<small>x</small></b>
            <b class="t"><svg><use href="#vpi"/></svg></b>
            <b class="t"><svg><use href="#vup"/></svg></b>
            <b class="t"><svg><use href="#vdn"/></svg></b>
            <b class="t"><svg><use href="#vlink"/></svg></b>
            <b class="t"><svg><use href="#vtree"/></svg></b>
            <b class="t"><svg><use href="#vdoc"/></svg></b>
            <b class="t on"><svg><use href="#vtab"/></svg></b>
            <b class="t"><svg><use href="#vtabx"/></svg></b>
            <b class="t"><svg><use href="#vq"/></svg></b>
        </div>
        <div class="vars-main">
            <div class="vars-table">
                <div class="vars-head"><span>Имя</span><span>Выражение</span><span>Значение</span><span>Параметр</span><span>Комме</span></div>
                <div class="vars-body">
                    <div class="root-row"><span class="box minus"></span><span class="root-text">(-) Станция обеспечения связи (Тел-2, Сборочных единиц-33, Д</span></div>
                    <div class="vrow"><span class="tw"></span><span class="nm">A2</span><span>0.0</span><span class="gr">0.0</span><span class="gr"></span><span class="clip">2)РКС</span></div>
                    <div class="vrow"><span class="tw"></span><span class="nm">A1</span><span>80.0</span><span class="gr">80.0</span><span class="gr"></span><span class="clip">2)РКС</span></div>
                    <div class="vrow"><span class="tw"></span><span class="nm">p</span><span>1.0</span><span class="gr">1.0</span><span class="gr"></span><span class="clip">2)РКС</span></div>
                    <div class="vrow"><span class="tw"></span><span class="nm">scht</span><span></span><span class="gr"></span><span class="gr"></span><span></span></div>
                    <div class="vrow"><span class="tw"></span><span class="nm">D</span><span></span><span class="gr"></span><span class="gr"></span><span></span></div>
                    <div class="vrow"><span class="tw"></span><span class="nm">Dl</span><span></span><span class="gr"></span><span class="gr"></span><span></span></div>
                    <div class="vrow"><span class="tw"></span><span class="nm">Dp</span><span></span><span class="gr"></span><span class="gr"></span><span></span></div>
                    <div class="vrow"><span class="tw"></span><span class="nm">p_d</span><span></span><span class="gr"></span><span class="gr"></span><span></span></div>
                    <div class="vrow"><span class="tw"></span><span class="nm">A</span><span></span><span class="gr"></span><span class="gr"></span><span></span></div>
                    <div class="vrow"><span class="tw"></span><span class="nm">alfa</span><span></span><span class="gr"></span><span class="gr"></span><span></span></div>
                    <div class="vrow"><span class="tw"></span><span class="nm">K1</span><span></span><span class="gr"></span><span class="gr"></span><span></span></div>
                    <div class="vrow"><span class="tw"></span><span class="nm">b1</span><span></span><span class="gr"></span><span class="gr"></span><span></span></div>
                    <div class="vrow"><span class="tw"></span><span class="nm">V1</span><span></span><span class="gr"></span><span class="gr"></span><span></span></div>
                    <div class="vrow"><span class="tw"></span><span class="nm">BB</span><span></span><span class="gr"></span><span class="gr"></span><span></span></div>
                    <div class="vrow"><span class="tw"></span><span class="nm">gp1</span><span></span><span class="gr"></span><span class="gr"></span><span></span></div>
                    <div class="vrow"><span class="tw"></span><span class="nm">T</span><span></span><span class="gr"></span><span class="gr"></span><span></span></div>
                    <div class="vrow"><span class="tw"></span><span>v255</span><span></span><span class="gr"></span><span class="gr"></span><span></span></div>
                    <div class="vrow"><span class="tw"></span><span>v255</span><span></span><span class="gr"></span><span class="gr"></span><span></span></div>
                    <div class="vrow"><span class="tw"></span><span>v255</span><span></span><span class="gr"></span><span class="gr"></span><span></span></div>
                    <div class="vrow"><span class="tw"></span><span>v255</span><span></span><span class="gr"></span><span class="gr"></span><span></span></div>
                    <div class="vrow"><span class="tw"></span><span class="nm">beta</span><span></span><span class="gr"></span><span class="gr"></span><span></span></div>
                    <div class="vrow"><span class="tw"></span><span class="nm">gamm</span><span></span><span class="gr"></span><span class="gr"></span><span></span></div>
                    <div class="vrow"><span class="tw"></span><span class="nm">t</span><span></span><span class="gr"></span><span class="gr"></span><span></span></div>
                    <div class="vrow"><span class="tw"></span><span class="nm">d</span><span></span><span class="gr"></span><span class="gr"></span><span></span></div>
                    <div class="vrow"><span class="tw"></span><span class="clip">v2551_</span><span>1.0</span><span class="gr">1.0</span><span class="gr"></span><span></span></div>
                    <div class="vrow"><span class="tw"></span><span></span><span></span><span class="gr"></span><span class="gr"></span><span></span></div>
                    <div class="lrow"><span class="box"></span>(т)Начало координат</div>
                    <div class="lrow"><span class="box"></span>(+) Прицеп Купава</div>
                    <div class="lrow"><span class="box"></span>(-) Антенна параболлическая</div>
                    <div class="lrow"><span class="box"></span>(+) Рама</div>
                    <div class="lrow"><span class="box"></span>(+) Установка видеокамеры</div>
                    <div class="lrow"><span class="box"></span>(+) Болтовое соединение М6х25 (1)</div>
                    <div class="lrow"><span class="box"></span>(+) РЛС</div>
                    <div class="lrow"><span class="box"></span>(+) Ложемент</div>
                    <div class="lrow"><span class="box"></span>(+) Прокладка</div>
                    <div class="lrow"><span class="box"></span>(+) Пластина</div>
                    <div class="lrow"><span class="box"></span>(-) Заклепка тяговая 3,2 (1)</div>
                    <div class="lrow"><span class="box"></span>(-) Вкладыш</div>
                    <div class="lrow"><span class="box"></span>(-) Вкладыш</div>
                    <div class="lrow"><span class="box"></span>(+) Винт регулировочный</div>
                    <div class="lrow"><span class="box"></span>(-) Ось в сборе (1)</div>
                    <div class="lrow"><span class="box"></span>(+) Болтовое соединение М10х30 (1)</div>
                    <div class="lrow"><span class="box"></span>(+) Антенна штырьевая большая</div>
                    <div class="lrow"><span class="box"></span>(+) Радиатор</div>
                    <div class="lrow"><span class="box"></span>(+) Хомут</div>
                    <div class="lrow"><span class="box"></span>(+) Канистра 20 л</div>
                    <div class="lrow"><span class="box"></span>(+) Электрощит 1</div>
                    <div class="lrow"><span class="box"></span>(+) Внутренний модуль кондиционера</div>
                    <div class="lrow"><span class="box"></span>(+) Стеллаж</div>
                </div>
            </div>
            <div class="vscroll vars-v"><b class="sb up"></b><i class="thumb"></i><b class="sb down"></b></div>
        </div>
        <div class="hscroll vars-h"><b class="sb left"></b><i class="thumb"></i><i class="track"></i><b class="sb right"></b></div>
    </section>

    <div class="doc-area">
        <div class="tabstrip">
            <div class="doc-tab"><svg><use href="#ta3d"/></svg><strong>Станция для обеспечения связи.a3d</strong><span>&#10005;</span></div>
            <em class="tabs-menu"></em>
        </div>
        <div class="doc-body">
            <!-- model tree -->
            <section class="tree">
                <div class="caption"><span>Дерево модели</span><span class="cap-btns">&#9110;&nbsp;&#10005;</span></div>
                <div class="tree-tools">
                    <b class="t on"><svg><use href="#tb1"/></svg></b>
                    <b class="t"><svg><use href="#tb2"/></svg></b><b class="dd"></b><i class="sp"></i>
                    <b class="t"><svg><use href="#tb3"/></svg></b>
                    <b class="t"><svg><use href="#tb4"/></svg></b>
                </div>
                <div class="tree-box">
                    <div class="tree-main">
                        <div class="tree-rows">
                            <div class="trow troot"><span class="box minus"></span><svg><use href="#troot"/></svg>Компоненты</div>
                            <div class="trow"><span class="box"></span><svg><use href="#tasm"/></svg>(+) Прицеп Купава</div>
                            <div class="trow"><span class="box"></span><svg><use href="#tasm"/></svg>(-) Антенна параболлическая</div>
                            <div class="trow"><span class="box"></span><svg><use href="#tasm"/></svg>(+) Рама</div>
                            <div class="trow"><span class="box"></span><svg><use href="#tasm"/></svg>(+) Установка видеокамеры</div>
                            <div class="trow"><span class="box"></span><svg><use href="#tasm"/></svg>(+) РЛС</div>
                            <div class="trow"><span class="box"></span><svg><use href="#tasm"/></svg>(+) Ложемент</div>
                            <div class="trow"><span class="box"></span><svg><use href="#tasm"/></svg>(+) Винт регулировочный</div>
                            <div class="trow"><span class="box"></span><svg><use href="#tasm"/></svg>(-) Ось в сборе (1)</div>
                            <div class="trow"><span class="box"></span><svg><use href="#tasm"/></svg>(+) Радиатор</div>
                            <div class="trow"><span class="box"></span><svg><use href="#tasm"/></svg>(+) Болтовое соединение М10х30 (1)</div>
                            <div class="trow"><span class="box"></span><svg><use href="#tasm"/></svg>(+) Хомут</div>
                            <div class="trow"><span class="box"></span><svg><use href="#tasm"/></svg>(+) Канистра 20 л</div>
                            <div class="trow"><span class="box"></span><svg><use href="#tasm"/></svg>(+) Стеллаж</div>
                            <div class="trow"><span class="box"></span><svg><use href="#tasm"/></svg>(+) Электрощит 1</div>
                            <div class="trow"><span class="box"></span><svg><use href="#tasm"/></svg>(+) Антенна штырьевая большая</div>
                            <div class="trow"><span class="box"></span><svg><use href="#tasm"/></svg>(+) Насос</div>
                            <div class="trow"><span class="box"></span><svg><use href="#tasm"/></svg>(+) Насос</div>
                            <div class="trow"><span class="box"></span><svg><use href="#tasm"/></svg>(+) Насос</div>
                            <div class="trow"><span class="box"></span><svg><use href="#tasm"/></svg>(+) Насос</div>
                            <div class="trow"><span class="box"></span><svg><use href="#tasm"/></svg>(+) Насос</div>
                            <div class="trow"><span class="box"></span><svg><use href="#tasm"/></svg>(+) Насос</div>
                            <div class="trow"><span class="box"></span><svg><use href="#tasm"/></svg>(+) Насос</div>
                            <div class="trow"><span class="box"></span><svg><use href="#tasm"/></svg>(+) Электрощит</div>
                            <div class="trow"><span class="box"></span><svg><use href="#tasm"/></svg>(+) Электрощит</div>
                            <div class="trow off"><span class="box"></span><em>&#10005;</em><svg><use href="#tgrey"/></svg>(+) Прокладка</div>
                            <div class="trow off"><span class="box"></span><em>&#10005;</em><svg><use href="#tgrey"/></svg>(+) Пластина</div>
                            <div class="trow off"><span class="box"></span><em>&#10005;</em><svg><use href="#tgrey"/></svg>(-) Заклепка тяговая 3,2 (1)</div>
                            <div class="trow off"><span class="box"></span><em>&#10005;</em><svg><use href="#tgrey"/></svg>(-) Вкладыш</div>
                            <div class="trow off"><span class="box"></span><em>&#10005;</em><svg><use href="#tgrey"/></svg>(-) Вкладыш</div>
                            <div class="trow warn"><span class="box"></span><svg><use href="#tpart"/></svg>(+) Внутренний модуль кондиционера</div>
                            <div class="trow off"><span class="box"></span><em>&#10005;</em><svg><use href="#tgrey"/></svg>(+) Антенна GPS</div>
                            <div class="trow"><span class="box"></span><svg><use href="#tpart"/></svg>(+) Тент</div>
                            <div class="trow"><span class="box"></span><svg><use href="#tpart"/></svg>(+) Электрощит</div>
                            <div class="trow"><span class="box"></span><svg><use href="#tpart"/></svg>(+) Опора</div>
                            <div class="trow"><span class="box"></span><svg><use href="#tpart"/></svg>(-) -01 Фланец</div>
                            <div class="trow"><span class="box"></span><svg><use href="#tpart"/></svg>(+) Отопитель Breeze</div>
                            <div class="trow"><span class="box"></span><svg><use href="#tpart"/></svg>(-) Труба выпускная</div>
                            <div class="trow"><span class="box"></span><svg><use href="#tpart"/></svg>(+) Консоль Метеостанции</div>
                            <div class="trow"><span class="box"></span><svg><use href="#tstd"/></svg>(-) Винт М5-6gх50 ГОСТ 11738-84 (х4)</div>
                            <div class="trow"><span class="box"></span><svg><use href="#tstd"/></svg>(-) Гайка М5-6Н.NF ГОСТ Р 50273-92 (х4)</div>
                            <div class="trow"><span class="box"></span><svg><use href="#tstd"/></svg>(-) Шайба С.5.37 ГОСТ 11371-78 (х5)</div>
                            <div class="trow"><span class="box"></span><svg><use href="#tstd"/></svg>(-) Шуруп 3-4х20.3 ГОСТ 1144-80 (х4)</div>
                        </div>
                        <div class="vscroll tree-v"><b class="sb up"></b><i class="track track-top"></i><i class="thumb"></i><i class="track"></i><b class="sb down"></b></div>
                    </div>
                    <div class="hscroll tree-h"><b class="sb left"></b><i class="thumb"></i><i class="track"></i><b class="sb right"></b></div>
                </div>
                <div class="tree-tabs"><span class="active">Построение</span><span>Исполнения</span><span>Зоны</span></div>
            </section>

            <!-- 3d view -->
            <div class="viewport">
                <svg class="model" viewBox="665 113 1135 887" stroke-linejoin="round">
                    <!-- wheels, behind the body -->
                    <ellipse cx="1340" cy="833" rx="29" ry="46" fill="#999" stroke="#111"/>
                    <ellipse cx="1334" cy="833" rx="24" ry="45" fill="none" stroke="#111" stroke-dasharray="2 2"/>
                    <ellipse cx="1328" cy="833" rx="16" ry="44" fill="none" stroke="#111" stroke-dasharray="2 2"/>
                    <ellipse cx="1345" cy="835" rx="23" ry="39" fill="#777" stroke="#222"/>
                    <ellipse cx="1343" cy="837" rx="16" ry="24" fill="#4a4a4a" stroke="#111"/>
                    <ellipse cx="1343" cy="837" rx="9" ry="14" fill="#6a6a6a" stroke="#111" stroke-dasharray="2 2"/>
                    <ellipse cx="1343" cy="837" rx="3.500" ry="6" fill="#333" stroke="#111"/>
                    <ellipse cx="1280" cy="857" rx="32" ry="46" fill="#999" stroke="#111"/>
                    <ellipse cx="1274" cy="857" rx="26" ry="45" fill="none" stroke="#111" stroke-dasharray="2 2"/>
                    <ellipse cx="1267" cy="857" rx="18" ry="44" fill="none" stroke="#111" stroke-dasharray="2 2"/>
                    <ellipse cx="1290" cy="857" rx="23" ry="40" fill="#777" stroke="#222"/>
                    <ellipse cx="1289" cy="854" rx="15" ry="21" fill="#4a4a4a" stroke="#111"/>
                    <ellipse cx="1289" cy="854" rx="9" ry="13" fill="#6a6a6a" stroke="#111" stroke-dasharray="2 2"/>
                    <ellipse cx="1289" cy="854" rx="3.500" ry="5.500" fill="#333" stroke="#111"/>

                    <!-- hood -->
                    <path d="M1103 374L1165 317L1179 313H1342L1395 330L1493 383L1496 395L1413 433L1388 435L1105 385Z" fill="#f4f4f4" stroke="#222"/>
                    <path d="M1165 317L1179 313H1342L1395 330L1392 343Z" fill="#e6e6e6" stroke="#222"/>
                    <path d="M1103 374L1165 317L1158 393Z" fill="#fbfbfb" stroke="#222"/>
                    <path d="M1395 330L1493 383L1496 395L1413 433L1388 435V427L1392 343Z" fill="#939393" stroke="#222"/>
                    <path d="M1392 343L1413 410V433" fill="none" stroke="#222"/>
                    <path d="M1103 374L1158 393L1388 427V435L1105 385Z" fill="#ececec" stroke="#222"/>

                    <!-- roof -->
                    <path d="M846 496L1105 385L1388 435L1413 433L1163 545Z" fill="#939393" stroke="#222"/>
                    <path d="M846 496L1105 385L1110 390L862 500Z" fill="#bdbdbd" stroke="#333" stroke-width=".7"/>

                    <!-- side wall -->
                    <path d="M1163 545L1493 397L1498 745L1388 791L1381 775Q1375 762 1365 768L1291 801Q1277 812 1273 837L1248 856L1172 883L1172 550Z" fill="#565656" stroke="#111"/>
                    <path d="M1388 791L1381 775Q1375 762 1365 768L1291 801Q1277 812 1273 837L1248 856" fill="none" stroke="#a0a0a0" stroke-width="2"/>
                    <path d="M1163 545L1413 433L1493 397L1496 393" fill="none" stroke="#ccc" stroke-width="2"/>
                    <path d="M1493 397L1498 745" stroke="#aaa" stroke-width="3"/>

                    <!-- window and shutter -->
                    <path d="M1266 524L1397 463V658L1266 715Z" fill="#767676" stroke="#222"/>
                    <path d="M1273 551L1391 496V648L1273 700Z" fill="#8e8e8e" stroke="#222"/>
                    <g id="louvers" stroke="#1c1c1c" stroke-width="1">
                        <path id="lv" d="M1273 556L1391 503"/>
                        <use href="#lv" y="9.500"/><use href="#lv" y="19"/><use href="#lv" y="28.500"/><use href="#lv" y="38"/><use href="#lv" y="47.500"/><use href="#lv" y="57"/><use href="#lv" y="66.500"/><use href="#lv" y="76"/><use href="#lv" y="85.500"/><use href="#lv" y="95"/><use href="#lv" y="104.500"/><use href="#lv" y="114"/><use href="#lv" y="123.500"/><use href="#lv" y="133"/>
                    </g>
                    <path d="M1330 520V666M1391 496V648" stroke="#222" stroke-dasharray="3 2"/>
                    <path d="M1255 525L1406 456L1406 460L1255 529Z" fill="#bdbdbd" stroke="#222"/>
                    <path d="M1266 527V553" stroke="#fff" stroke-width="1.500"/>
                    <ellipse cx="1278" cy="698" rx="4" ry="2" fill="#eee"/>
                    <ellipse cx="1391" cy="648" rx="4" ry="2" fill="#eee"/>

                    <!-- hatch -->
                    <path d="M1418 665L1489 635V742L1420 778Z" fill="#6a6a6a" stroke="#111" stroke-width="1.500"/>
                    <path d="M1423 671L1484 645V738L1424 768Z" fill="#565656" stroke="#222"/>
                    <rect x="1449" y="742" width="12" height="8" fill="#777" stroke="#111"/>
                    <circle cx="1399" cy="749" r="8" fill="#666" stroke="#222"/>
                    <circle cx="1399" cy="749" r="3.500" fill="#999" stroke="#222"/>

                    <!-- rear face -->
                    <path d="M846 496L1163 545L1167 917L1163 903L850 871Z" fill="#7c7c7c" stroke="#111"/>
                    <path d="M846 496L1163 545L1172 550V883L1167 917L1163 545" fill="#9a9a9a" stroke="#222"/>
                    <path d="M848 499L1160 549L1155 558L858 508Z" fill="#777" stroke="#222"/>
                    <path d="M856 511L1003 533V860L856 838Z" fill="#666" stroke="#222"/>
                    <path d="M860 513L1003 534V858L860 838Z" fill="#dcdcdc" stroke="#222"/>
                    <path d="M1003 532H1009V863H1003Z" fill="#333"/>
                    <path d="M1009 536L1151 555V879L1009 864Z" fill="#dcdcdc" stroke="#222"/>
                    <path d="M1151 555L1158 550V890L1151 879Z" fill="#666" stroke="#222"/>
                    <path d="M850 851L1160 897L1167 917L851 871Z" fill="#808080" stroke="#111"/>
                    <path d="M852 856L1160 902" stroke="#222" stroke-dasharray="2 2"/>
                    <ellipse cx="901" cy="865" rx="9" ry="4" fill="#999" stroke="#111"/>
                    <ellipse cx="1121" cy="897" rx="9" ry="4" fill="#999" stroke="#111"/>

                    <!-- hinges -->
                    <g id="hinge" fill="#777" stroke="#111" stroke-width="1">
                        <rect x="851" y="551" width="32" height="17" rx="2"/>
                        <path d="M846 551h6v16h-6zM858 551v17M866 551v17M874 551v17M851 560h32"/>
                    </g>
                    <use href="#hinge" y="234"/>
                    <use href="#hinge" x="281" y="43"/>
                    <use href="#hinge" x="281" y="277"/>

                    <!-- axes triad -->
                    <path d="M733 928V890" stroke="#5cc05c" stroke-width="5"/>
                    <path d="M733 880l5 14h-10z" fill="#5cc05c"/>
                    <path d="M733 928L752 921" stroke="#d83838" stroke-width="5"/>
                    <path d="M758 917l-12 0 4 8z" fill="#d83838"/>
                    <path d="M733 928L770 936" stroke="#4a80d8" stroke-width="5"/>
                    <path d="M778 939l-12-8-1 9z" fill="#4a80d8"/>
                    <circle cx="733" cy="929" r="7" fill="#f0e060" stroke="#c8b030"/>
                    <text class="axis-y" x="729" y="877">Y</text>
                    <text class="axis-x" x="758" y="921">X</text>
                    <text class="axis-z" x="780" y="942">Z</text>
                </svg>
            </div>
        </div>
    </div>
</div>

<div class="output">
    <i class="out-grip"></i>
    <div class="out-box"></div>
</div>

<div class="statusbar">Щелкните левой кнопкой мыши на объекте для его выделения (вместе с Ctrl - добавить к выделенным)</div>

<!-- dialog over the panels -->
<div class="dialog">
    <div class="dlg-title"><span>Таблица переменных</span><b class="dlg-close">&#10005;</b></div>
    <div class="dlg-tools">
        <b class="t"><svg><use href="#dopen"/></svg></b>
        <b class="t"><svg><use href="#dsave"/></svg></b>
        <b class="t"><svg><use href="#dv"/></svg></b><i class="sp"></i>
        <b class="t abc">abc<br>cba</b><i class="sp"></i>
        <b class="t"><svg><use href="#rw1"/></svg></b>
        <b class="t"><svg><use href="#rw2"/></svg></b>
        <b class="t"><svg><use href="#rw3"/></svg></b><i class="sp"></i>
        <b class="t"><svg><use href="#cl1"/></svg></b>
        <b class="t"><svg><use href="#cl1"/></svg></b>
        <b class="t"><svg><use href="#cl3"/></svg></b><i class="sp"></i>
        <b class="t"><svg><use href="#upg"/></svg></b>
        <b class="t"><svg><use href="#dnb"/></svg></b><i class="sp"></i>
        <b class="t on"><svg><use href="#pane"/></svg></b>
    </div>
    <div class="dlg-grid">
        <div class="dg-row dg-head"><span></span><span class="first">Комментарий</span><span>A2</span><span>A1</span><span>p</span><span>scht</span><span>D</span></div>
        <div class="dg-row dg-sel"><span class="ind"><em></em></span><span>ТРАНСПОРТНОЕ ПОЛОЖЕНИЕ</span><span>0</span><span>80</span><span>1</span><span>1</span><span>1</span></div>
        <div class="dg-row dg-plain"><span class="ind"></span><span>РАБОЧЕЕ ПОЛОЖЕНИЕ</span><span>45</span><span>0</span><span>0</span><span>0</span><span>0</span></div>
        <div class="dg-fill"></div>
        <div class="hscroll dlg-h"><b class="sb left"></b><i class="thumb"></i><i class="track"></i><b class="sb right"></b></div>
    </div>
    <div class="dlg-buttons">
        <button class="assign">Присвоить значения переменным</button>
        <button>OK</button>
        <button>Отмена</button>
        <button>Справка</button>
    </div>
    <svg class="dlg-resize" viewBox="0 0 12 12"><path d="M11 2L2 11M11 6L6 11M11 9L9 11" stroke="#888"/></svg>
</div>
<svg class="cursor" viewBox="0 0 12 20"><path d="M1 1v15l4-4 3 7 2-1-3-7h5z" fill="#fff" stroke="#444"/></svg>
</body>
</html>
```

FILE: styles.css
```css
* {
    margin: 0;
    padding: 0;
    box-sizing: border-box;
}

html, body {
    width: 1800px;
    height: 1080px;
    overflow: hidden;
}

body {
    background: #e1e4e7;
    color: #3c3c3c;
    font: 11px/1 "Liberation Sans", Arial, sans-serif;
    letter-spacing: -0.25px;
    position: relative;
    display: flex;
    flex-direction: column;
}

.sprite {
    display: none;
}

i, b, em {
    font-style: normal;
    font-weight: normal;
}

/* Title bar and menu */
.titlebar {
    height: 18px;
    flex: none;
    background: #fcfcfd;
    display: flex;
    align-items: center;
    justify-content: center;
    position: relative;
    color: #8a8a8a;
    letter-spacing: -0.45px;
}

.logo {
    width: 16px;
    height: 16px;
    position: absolute;
    left: 1px;
    top: 0;
}

.title-text {
    margin-left: -50px;
}

.win-buttons {
    position: absolute;
    right: 5px;
    top: 3px;
    display: flex;
    gap: 10px;
    align-items: center;
}

.win-buttons svg {
    width: 12px;
    height: 12px;
}

.menubar {
    height: 23px;
    flex: none;
    display: flex;
    align-items: center;
    padding-left: 16px;
    gap: 14px;
    color: #555;
    letter-spacing: -0.5px;
}

/* Toolbars */
.toolrow {
    height: 25px;
    flex: none;
    display: flex;
    padding-left: 4px;
    gap: 1px;
}

.toolrow-second {
    height: 22px;
}

.toolbar {
    height: 23px;
    display: flex;
    align-items: center;
    background: linear-gradient(#fff, #f3f5f6);
    border-radius: 3px 0 0 3px;
    border-bottom: 1px solid #cfd2d5;
    position: relative;
}

.toolbar-right {
    margin-left: 286px;
}

.grip {
    width: 8px;
    height: 16px;
    flex: none;
    background: repeating-linear-gradient(#b4b8bc 0 2px, transparent 2px 4px) 3px 0 / 2px 100% no-repeat;
}

.grip-wide {
    width: 12px;
}

.t {
    width: 20.5px;
    height: 22px;
    flex: none;
    display: flex;
    align-items: center;
    justify-content: center;
}

.t svg {
    width: 16px;
    height: 16px;
}

.t.on {
    background: linear-gradient(#ffe9a8, #fbcb6c);
    border: 1px solid #e0a840;
    border-radius: 3px;
}

.t.wide {
    width: 24px;
}

.t.narrow {
    width: 15px;
}

.t.fx {
    color: #123a8a;
    font-size: 12px;
    letter-spacing: -0.5px;
}

.dd {
    width: 11px;
    height: 20px;
    flex: none;
    position: relative;
}

.dd::after {
    content: "";
    position: absolute;
    left: 3px;
    top: 9px;
    border: 3px solid transparent;
    border-top: 3px solid #222;
    border-bottom: 0;
}

.sp {
    width: 8px;
    height: 18px;
    flex: none;
    background: linear-gradient(#c2c5c8, #c2c5c8) center / 1px 100% no-repeat;
}

.cap {
    width: 11px;
    height: 23px;
    flex: none;
    background: linear-gradient(#d9dbdd, #a9abad);
    border-radius: 0 3px 3px 0;
    position: relative;
}

.cap::after {
    content: "";
    position: absolute;
    left: 2px;
    bottom: 3px;
    width: 7px;
    height: 5px;
    border-top: 1px solid #222;
    background: linear-gradient(135deg, transparent 50%, #222 50%) left / 50% 100% no-repeat,
                linear-gradient(225deg, transparent 50%, #222 50%) right / 50% 100% no-repeat;
}

.combo {
    height: 20px;
    flex: none;
    background: #fff;
    border: 1px solid #bfc2c5;
    padding: 0 15px 0 3px;
    line-height: 18px;
    position: relative;
    color: #444;
    white-space: nowrap;
    overflow: hidden;
    letter-spacing: -0.35px;
}

.combo::after {
    content: "";
    position: absolute;
    right: 0;
    top: 0;
    width: 15px;
    height: 18px;
    background: #c9c5bd;
    border-left: 1px solid #aaa;
}

.combo::before {
    content: "";
    position: absolute;
    right: 4px;
    top: 8px;
    border: 3px solid transparent;
    border-top: 3px solid #222;
    border-bottom: 0;
    z-index: 1;
}

.combo-scale { width: 61px; margin-left: 2px; }
.combo-step { width: 53px; margin: 0 4px 0 5px; }
.combo-layer { width: 116px; margin-left: 2px; }
.combo-part { width: 118px; margin-left: 2.5px; }
.combo-mode { width: 107px; margin-left: 1.5px; }

/* Main area */
.work {
    height: 917px;
    flex: none;
    display: flex;
    align-items: flex-start;
}

.strip {
    width: 21px;
    margin: 25px 2px 0;
    flex: none;
    display: flex;
    flex-direction: column;
    align-items: center;
    background: linear-gradient(90deg, #fff, #f1f3f5);
    border-radius: 3px 3px 0 0;
}

.strip-grip {
    width: 16px;
    height: 8px;
    background: repeating-linear-gradient(90deg, #b4b8bc 0 2px, transparent 2px 4px) 0 3px / 100% 2px no-repeat;
}

.st {
    width: 21px;
    height: 16px;
    flex: none;
    display: flex;
    align-items: center;
    justify-content: center;
}

.st svg {
    width: 15px;
    height: 15px;
}

.st.on {
    background: linear-gradient(#ffe9a8, #fbcb6c);
    outline: 1px solid #c89a38;
    outline-offset: -1px;
}

.st.big { height: 20px; }
.st.big2 { height: 21px; }
.st.big svg, .st.big2 svg { width: 17px; height: 17px; }

.strip-sep {
    width: 16px;
    height: 8px;
    flex: none;
    background: linear-gradient(#bbb, #bbb) center / 100% 1px no-repeat;
}

.strip-end {
    width: 21px;
    height: 14px;
    margin-top: 2px;
    background: linear-gradient(#cfd1d3, #9c9ea0);
    border-radius: 0 0 3px 3px;
    position: relative;
}

.strip-end em {
    position: absolute;
    right: 5px;
    top: 3px;
    border: 4px solid transparent;
    border-left: 4px solid #222;
    border-right: 0;
}

.caption {
    background: #7f7f7f;
    color: #b4b4b4;
    display: flex;
    justify-content: space-between;
    align-items: center;
    padding: 0 3px;
    flex: none;
}

.cap-btns {
    color: #e8e8e8;
    font-size: 10px;
}

/* Variables panel */
.vars {
    width: 340px;
    height: 913px;
    margin-top: 2px;
    flex: none;
    display: flex;
    flex-direction: column;
    background: #e6e8ea;
}

.vars .caption {
    height: 17px;
}

.vars-tools {
    height: 25px;
    flex: none;
    display: flex;
    align-items: center;
    background: linear-gradient(#fff, #f1f3f5);
}

.fxg {
    color: #999;
    font: italic 13px "Liberation Serif", serif;
}

.fxg small {
    font-size: 9px;
}

.vars-main {
    height: 856px;
    flex: none;
    display: flex;
}

.vars-table {
    width: 327px;
    flex: none;
}

.vars-head {
    height: 15px;
    display: grid;
    grid-template-columns: 72px 73px 73px 74px 35px;
    background: #d4d0c8;
}

.vars-head span {
    border-right: 1px solid #888;
    border-left: 1px solid #f4f2ee;
    text-align: center;
    line-height: 15px;
    overflow: hidden;
    white-space: nowrap;
}

.vars-body {
    height: 841px;
    overflow: hidden;
    background: #fff;
}

.root-row {
    height: 18px;
    display: flex;
    align-items: center;
    padding-left: 4px;
    background: linear-gradient(90deg, #fff 15px, #8a8a8a 15px);
    color: #222;
    overflow: hidden;
    white-space: nowrap;
}

.root-text {
    margin-left: 4px;
}

.box {
    width: 11px;
    height: 11px;
    flex: none;
    background: linear-gradient(#333, #333) center / 7px 1px no-repeat,
                linear-gradient(#333, #333) center / 1px 7px no-repeat,
                #fff;
    border: 1px solid #777;
}

.box.minus {
    background: linear-gradient(#333, #333) center / 7px 1px no-repeat, #fff;
}

.vrow {
    height: 16.870px;
    display: grid;
    grid-template-columns: 27px 45px 73px 73px 74px 35px;
    border-bottom: 1px solid #dcdfe2;
}

.vrow span {
    padding-left: 2px;
    line-height: 16px;
    white-space: nowrap;
    overflow: hidden;
}

.vrow .tw {
    margin-left: 9px;
    padding: 0;
    border-left: 1px dotted #777;
    position: relative;
}

.vrow .tw::after {
    content: "";
    position: absolute;
    left: 2px;
    top: 7px;
    width: 9px;
    border-top: 1px dotted #aaa;
}

.vrow .nm {
    background: #0000e0;
    color: #fff;
}

.vrow .gr {
    background: #808080;
    color: #bdbdbd;
    border-right: 1px solid #c8c8c8;
    margin-bottom: -1px;
}

.clip {
    text-overflow: clip;
}

.lrow {
    height: 16.870px;
    display: flex;
    align-items: center;
    gap: 4px;
    padding-left: 14px;
    border-bottom: 1px solid #dcdfe2;
    position: relative;
    white-space: nowrap;
}

.lrow::before {
    content: "";
    position: absolute;
    left: 9px;
    top: 0;
    bottom: -1px;
    border-left: 1px dotted #777;
}

/* Scrollbars */
.vscroll {
    display: flex;
    flex-direction: column;
    flex: none;
}

.hscroll {
    display: flex;
    flex: none;
}

.sb {
    width: 15px;
    height: 15px;
    flex: none;
    background: #d4d0c8;
    border: 1px solid;
    border-color: #fff #666 #666 #fff;
    position: relative;
}

.sb::after {
    content: "";
    position: absolute;
    border: 4px solid transparent;
}

.sb.up::after { left: 2.500px; top: 0; border-bottom-color: #111; }
.sb.down::after { left: 2.500px; top: 4px; border-top-color: #111; }
.sb.left::after { left: -1px; top: 2.500px; border-right-color: #111; }
.sb.right::after { left: 4px; top: 2.500px; border-left-color: #111; }

.thumb {
    display: block;
    background: #d4d0c8;
    border: 1px solid;
    border-color: #fff #666 #666 #fff;
}

.track {
    display: block;
    background: conic-gradient(#fff 25%, #d8d5ce 0 50%, #fff 0 75%, #d8d5ce 0) 0 0 / 2px 2px;
}

.vars-v {
    width: 13px;
}

.vars-v .sb {
    width: 13px;
}

.vars-v .sb.up::after, .vars-v .sb.down::after {
    left: 1.500px;
}

.vars-v .thumb {
    flex: 1;
}

.vars-h {
    width: 327px;
    height: 15px;
}

.vars-h .thumb {
    width: 266px;
}

.vars-h .track {
    width: 30px;
    background: #e1e4e7;
}

/* Document area */
.doc-area {
    flex: 1;
    min-width: 0;
    margin-left: 3px;
    margin-top: 2px;
}

.tabstrip {
    height: 21px;
    background: linear-gradient(#fff, #f0f2f4);
    border-top: 1px solid #808080;
    border-bottom: 2px solid #c0c2c4;
    margin-right: 5px;
    position: relative;
}

.doc-tab {
    width: 255px;
    height: 20px;
    margin-left: 24px;
    margin-top: -1px;
    background: #fff;
    border: 1px solid #777;
    border-left: 0;
    border-bottom: 0;
    border-radius: 0 3px 0 0;
    display: flex;
    align-items: center;
    position: relative;
    color: #222;
}

.doc-tab::before {
    content: "";
    position: absolute;
    left: -12px;
    top: -1px;
    width: 24px;
    height: 21px;
    background: #fff;
    border-left: 1px solid #777;
    border-top: 1px solid #777;
    transform: skewX(-46deg);
    z-index: 0;
}

.doc-tab svg {
    width: 16px;
    height: 16px;
    margin-left: 2px;
    position: relative;
    z-index: 1;
}

.doc-tab strong {
    margin-left: 9px;
    white-space: nowrap;
    letter-spacing: -0.1px;
}

.doc-tab span {
    margin-left: 14px;
    font-size: 10px;
}

.tabs-menu {
    position: absolute;
    right: 1px;
    top: 8px;
    border: 4px solid transparent;
    border-top: 5px solid #111;
    border-bottom: 0;
}

.doc-body {
    display: flex;
    height: 887px;
    margin-top: 2px;
}

/* Model tree */
.tree {
    width: 287px;
    height: 887px;
    margin-left: 5px;
    flex: none;
    display: flex;
    flex-direction: column;
}

.tree .caption {
    height: 18px;
}

.tree-tools {
    height: 22px;
    flex: none;
    display: flex;
    align-items: center;
    padding-left: 3px;
    background: linear-gradient(#fff, #f1f3f5);
}

.tree-box {
    height: 827px;
    flex: none;
    border: 3px solid #d4d0c8;
    border-right-width: 5px;
    outline: 1px solid #8a8a8a;
    outline-offset: -1px;
    background: #d4d0c8;
    display: flex;
    flex-direction: column;
}

.tree-main {
    flex: 1;
    min-height: 0;
    display: flex;
}

.tree-rows {
    flex: 1;
    min-width: 0;
    overflow: hidden;
    background: #fff;
    padding-top: 4px;
    position: relative;
}

.tree-rows::before {
    content: "";
    position: absolute;
    left: 13px;
    top: 14px;
    bottom: 0;
    border-left: 1px dotted #777;
}

.trow {
    height: 18.755px;
    display: flex;
    align-items: center;
    white-space: nowrap;
    padding-left: 30px;
    position: relative;
    color: #3c3c3c;
}

.trow svg {
    width: 18px;
    height: 18px;
    flex: none;
    margin: 0 5px 0 7px;
}

.trow em {
    width: 11px;
    font-size: 11px;
    font-weight: bold;
    color: #111;
    margin-left: 4px;
    margin-right: -8px;
    flex: none;
}

.trow.troot {
    padding-left: 8px;
}

.trow.troot svg {
    width: 16px;
    height: 16px;
    margin: 0 7px 0 7px;
}

.trow.warn::after {
    content: "!";
    position: absolute;
    left: 66px;
    top: 0;
    color: #d01010;
    font-weight: bold;
    font-size: 9px;
}

.tree-v {
    width: 15px;
}

.tree-v .track-top {
    height: 90px;
}

.tree-v .thumb {
    height: 611px;
}

.tree-v .track:not(.track-top) {
    flex: 1;
}

.tree-h {
    height: 15px;
    padding-right: 15px;
}

.tree-h .thumb {
    width: 157px;
}

.tree-h .track {
    flex: 1;
}

.tree-tabs {
    height: 20px;
    flex: none;
    display: flex;
    align-items: center;
    padding-left: 3px;
    gap: 4px;
    color: #555;
}

.tree-tabs span {
    padding: 3px 4px;
}

.tree-tabs .active {
    background: #fff;
    border-radius: 2px;
}

/* 3D view */
.viewport {
    width: 1135px;
    height: 887px;
    margin-left: 5px;
    flex: none;
    background: #fff;
    box-shadow: -2px -1px 0 #6a6a6a;
    margin-top: 0;
}

.model {
    display: block;
    width: 1135px;
    height: 887px;
}

.model text {
    font-size: 11px;
}

.axis-y { fill: #60c060; }
.axis-x { fill: #d84040; }
.axis-z { fill: #4a80d8; }

/* Output and status */
.output {
    height: 62px;
    flex: none;
    position: relative;
    display: flex;
    align-items: flex-start;
    padding-left: 25px;
    border-top: 2px solid #c0c2c4;
}

.out-grip {
    width: 3px;
    height: 50px;
    margin-top: 5px;
    flex: none;
    background: repeating-linear-gradient(#aaa 0 1px, transparent 1px 2px);
}

.out-box {
    width: 1763px;
    height: 33px;
    margin: 4px 0 0 2px;
    background: #d4d0c8;
    border-top: 1px solid #777;
    border-bottom: 2px solid #777;
    border-right: 1px solid #aaa;
    border-left: 1px solid #777;
}

.statusbar {
    height: 13px;
    flex: none;
    background: linear-gradient(#f2f4f5, #dfe2e5);
    border-top: 1px solid #cfd2d5;
    padding-left: 7px;
    line-height: 17px;
    overflow: hidden;
    white-space: nowrap;
    color: #555;
    letter-spacing: -0.32px;
}

/* Dialog */
.dialog {
    position: absolute;
    left: 77px;
    top: 206px;
    width: 545px;
    height: 372px;
    background: #d4d0c8;
    border: 3px solid;
    border-color: #ece9e3 #555 #555 #ece9e3;
    box-shadow: 0 0 0 1px #b8b4ac;
    display: flex;
    flex-direction: column;
    color: #333;
}

.dlg-title {
    height: 17px;
    flex: none;
    background: linear-gradient(90deg, #0a246a, #a6caf0);
    color: #fff;
    font: bold 11px "DejaVu Sans", sans-serif;
    display: flex;
    align-items: center;
    justify-content: space-between;
    padding-left: 2px;
}

.dlg-title span {
    letter-spacing: -0.2px;
}

.dlg-close {
    width: 14px;
    height: 14px;
    margin-right: 2px;
    background: #d4d0c8;
    color: #111;
    font-size: 10px;
    font-weight: bold;
    text-align: center;
    line-height: 13px;
    border: 1px solid;
    border-color: #fff #555 #555 #fff;
}

.dlg-tools {
    height: 24px;
    flex: none;
    display: flex;
    align-items: center;
    padding-left: 3px;
}

.dlg-tools .sp {
    width: 7px;
    background-image: linear-gradient(#999, #999);
}

.t.abc {
    color: #aaa;
    font-size: 8px;
    line-height: 8px;
    text-align: center;
    display: block;
    padding-top: 3px;
    letter-spacing: 0;
}

.dlg-grid {
    height: 287px;
    margin: 1px 5px 0 4px;
    flex: none;
    background: #fff;
    display: flex;
    flex-direction: column;
    border-top: 2px solid #555;
    border-left: 2px solid #888;
    border-right: 1px solid #ddd;
    overflow: hidden;
}

.dg-row {
    display: grid;
    grid-template-columns: 17px 188px 75px 75px 75px 75px 22px;
    flex: none;
}

.dg-row span {
    padding-left: 3px;
    white-space: nowrap;
    overflow: hidden;
}

.dg-head {
    height: 20px;
    line-height: 20px;
    background: #dfe2e5;
}

.dg-head span {
    border-right: 1px solid #f6f6f6;
}

.dg-head .first {
    padding-left: 4px;
}

.dg-sel {
    height: 16px;
    line-height: 15px;
    background: #0a246a;
    color: #e8e8ff;
    box-shadow: 0 1px 0 #f0d78c;
    position: relative;
}

.dg-sel span {
    border-right: 1px solid #5a6a9a;
}

.dg-sel span:nth-child(2), .dg-plain span:nth-child(2) {
    padding-left: 2px;
}

.ind {
    background: #dfe2e5;
    position: relative;
    border-right: 0;
}

.dg-sel .ind {
    border-right: 1px solid #f0d78c;
    background: #dfe2e5;
}

.ind em {
    position: absolute;
    left: 5px;
    top: 3px;
    border: 5px solid transparent;
    border-left: 6px solid #111;
    border-right: 0;
}

.dg-plain {
    height: 16px;
    line-height: 16px;
    border-bottom: 1px solid #d8dadc;
}

.dg-plain span {
    border-right: 1px solid #e0e2e4;
}

.dg-fill {
    flex: 1;
}

.dlg-h {
    height: 16px;
    margin-bottom: 0;
}

.dlg-h .sb {
    width: 16px;
    height: 16px;
}

.dlg-h .thumb {
    width: 152px;
}

.dlg-h .track {
    flex: 1;
}

.dlg-buttons {
    flex: 1;
    display: flex;
    gap: 6px;
    padding: 10px 0 0 120px;
}

.dlg-buttons button {
    width: 70px;
    height: 22px;
    font: 11px "Liberation Sans", sans-serif;
    letter-spacing: inherit;
    color: #333;
    background: #d4d0c8;
    border: 1px solid;
    border-color: #fff #666 #666 #fff;
    border-radius: 0;
}

.dlg-buttons .assign {
    width: 177px;
}

.dlg-resize {
    position: absolute;
    right: 0;
    bottom: 0;
    width: 12px;
    height: 12px;
}

.cursor {
    position: absolute;
    left: 217px;
    top: 382px;
    width: 12px;
    height: 20px;
}
```
